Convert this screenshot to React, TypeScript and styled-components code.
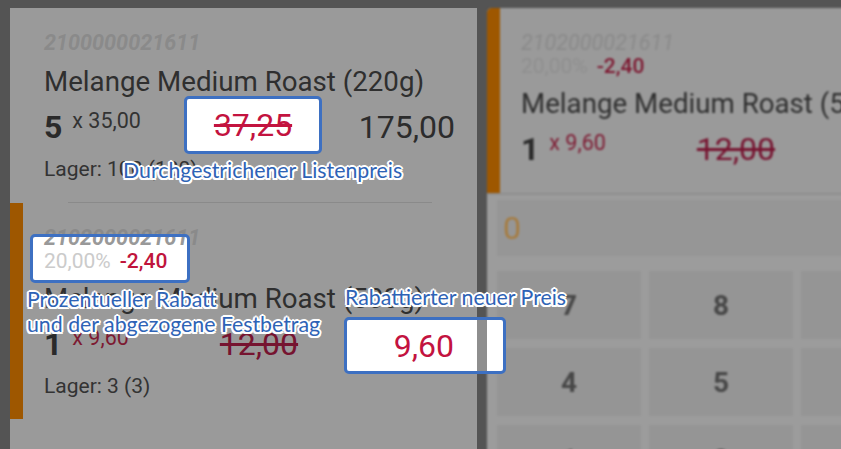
import styled, { createGlobalStyle } from 'styled-components';

const GlobalStyle = createGlobalStyle`
  html, body {
    margin: 0;
    padding: 0;
    background: #545454;
    overflow: hidden;
  }
  body {
    font-family: Roboto, 'Liberation Sans', sans-serif;
  }
`;

const Screen = styled.div`
  position: relative;
  width: 841px;
  height: 449px;
  overflow: hidden;
  box-sizing: border-box;
  padding: 8px 0 0 10px;
  display: flex;
  gap: 10px;
  background: #545454;
`;

const CartPanel = styled.div`
  flex: 0 0 467px;
  height: 470px;
  background: #9a9a9a;
  border-radius: 5px 5px 0 0;
`;

const KeypadPanel = styled.div`
  flex: 0 0 467px;
  height: 470px;
  background: #9c9c9c;
  border-radius: 5px 5px 0 0;
  overflow: hidden;
  filter: blur(1px);
  display: flex;
  flex-direction: column;
`;

const Item = styled.div<{ $discounted?: boolean; $card?: boolean }>`
  box-sizing: border-box;
  display: flex;
  flex-direction: column;
  padding: 23px 22px ${p => (p.$card ? 24 : 21)}px ${p => (p.$discounted ? 21 : 34)}px;
  border-left: ${p => (p.$discounted ? '13px solid #9e5700' : 'none')};
  background: #9a9a9a;
  box-shadow: ${p => (p.$card ? '0 1px 2px rgba(0, 0, 0, 0.18)' : 'none')};
`;

const Barcode = styled.div<{ $light?: boolean; $tone?: string }>`
  font-size: 21.6px;
  line-height: 24px;
  font-style: italic;
  font-weight: ${p => (p.$light ? 400 : 700)};
  color: ${p => p.$tone || '#8a8a8a'};
  white-space: nowrap;
`;

const DiscountLine = styled.div`
  display: flex;
  gap: 9px;
  font-size: 21px;
  line-height: 22px;
  white-space: nowrap;
`;

const Percent = styled.span<{ $tone?: string }>`
  color: ${p => p.$tone || '#8f8f8f'};
`;

const Deduction = styled.span<{ $tone?: string }>`
  color: ${p => p.$tone || '#7d1730'};
  font-weight: 500;
`;

const ProductName = styled.div`
  margin-top: 9px;
  font-size: 27.7px;
  line-height: 36px;
  color: #2f2f2f;
  white-space: nowrap;
`;

const PriceRow = styled.div`
  display: flex;
  align-items: flex-start;
  margin-top: 7px;
  height: 40px;
  white-space: nowrap;
`;

const Quantity = styled.span`
  font-size: 32px;
  line-height: 40px;
  font-weight: 700;
  color: #2a2a2a;
`;

const UnitPrice = styled.span<{ $reduced?: boolean }>`
  margin: 2px 0 0 10px;
  font-size: 21.5px;
  line-height: 24px;
  color: ${p => (p.$reduced ? '#7d1a32' : '#333333')};
`;

const ListPrice = styled.span`
  margin-left: 91px;
  font-size: 32px;
  line-height: 40px;
  color: #761430;
  text-decoration: line-through;
`;

const Total = styled.span<{ $reduced?: boolean }>`
  margin-left: auto;
  font-size: 32px;
  line-height: 40px;
  color: ${p => (p.$reduced ? '#761430' : '#2c2c2c')};
`;

const Stock = styled.div`
  margin-top: 10px;
  font-size: 21px;
  line-height: 24px;
  color: #333333;
`;

const Divider = styled.div`
  height: 1px;
  margin: 0 45px 0 58px;
  background: #8a8a8a;
`;

const Display = styled.div`
  margin: 7px 10px 0;
  height: 56px;
  padding-left: 6px;
  background: #969696;
  font-size: 32px;
  line-height: 56px;
  color: #a67c40;
`;

const Keypad = styled.div`
  margin: 15px 10px 0;
  display: grid;
  grid-template-columns: repeat(3, 144px);
  grid-auto-rows: 68px;
  gap: 9px 8px;
`;

const Key = styled.div`
  display: flex;
  align-items: center;
  justify-content: center;
  background: #959595;
  font-size: 28px;
  font-weight: 700;
  color: #474747;
`;

const Callout = styled.div<{ $x: number; $y: number; $w: number; $h: number }>`
  position: absolute;
  left: ${p => p.$x}px;
  top: ${p => p.$y}px;
  width: ${p => p.$w}px;
  height: ${p => p.$h}px;
  box-sizing: border-box;
  border: 3px solid #3d70c2;
  border-radius: 5px;
  background: #ffffff;
  overflow: hidden;
`;

const CalloutPrice = styled.div<{ $align: 'center' | 'right' }>`
  display: flex;
  justify-content: ${p => (p.$align === 'center' ? 'center' : 'flex-end')};
  padding: ${p => (p.$align === 'center' ? '6px 0 0' : '6px 49px 0 0')};
  font-size: 32px;
  line-height: 40px;
  color: #c3133f;
`;

const Struck = styled.span`
  text-decoration: line-through;
`;

const CalloutDiscount = styled.div`
  margin-top: -11px;
  padding-left: 11px;
`;

const PanelGap = styled.div`
  position: absolute;
  left: 130px;
  top: 0;
  bottom: 0;
  width: 10px;
  background: #8e8e8e;
`;

const Label = styled.div<{ $x: number; $y: number }>`
  position: absolute;
  left: ${p => p.$x}px;
  top: ${p => p.$y}px;
  font-family: Lato, 'Open Sans', sans-serif;
  font-size: 21.3px;
  line-height: 25px;
  color: #2e63b6;
  white-space: nowrap;
  text-shadow:
    -2px 0 #fff, 2px 0 #fff, 0 -2px #fff, 0 2px #fff,
    -1.5px -1.5px #fff, 1.5px 1.5px #fff, -1.5px 1.5px #fff, 1.5px -1.5px #fff,
    0 0 3px #fff;
`;

const keys = ['7', '8', '9', '4', '5', '6', '1', '2', '3'];

export default function App() {
  return (
    <>
      <GlobalStyle />
      <Screen>
        <CartPanel>
          <Item>
            <Barcode>2100000021611</Barcode>
            <ProductName>Melange Medium Roast (220g)</ProductName>
            <PriceRow>
              <Quantity>5</Quantity>
              <UnitPrice>x 35,00</UnitPrice>
              <ListPrice>37,25</ListPrice>
              <Total>175,00</Total>
            </PriceRow>
            <Stock>Lager: 100 (100)</Stock>
          </Item>
          <Divider />
          <Item $discounted>
            <Barcode>2102000021611</Barcode>
            <DiscountLine>
              <Percent>20,00%</Percent>
              <Deduction>-2,40</Deduction>
            </DiscountLine>
            <ProductName>Melange Medium Roast (500g)</ProductName>
            <PriceRow>
              <Quantity>1</Quantity>
              <UnitPrice $reduced>x 9,60</UnitPrice>
              <ListPrice>12,00</ListPrice>
              <Total $reduced>9,60</Total>
            </PriceRow>
            <Stock>Lager: 3 (3)</Stock>
          </Item>
        </CartPanel>

        <KeypadPanel>
          <Item $discounted $card>
            <Barcode $light>2102000021611</Barcode>
            <DiscountLine>
              <Percent>20,00%</Percent>
              <Deduction>-2,40</Deduction>
            </DiscountLine>
            <ProductName>Melange Medium Roast (500g)</ProductName>
            <PriceRow>
              <Quantity>1</Quantity>
              <UnitPrice $reduced>x 9,60</UnitPrice>
              <ListPrice>12,00</ListPrice>
              <Total $reduced>9,60</Total>
            </PriceRow>
          </Item>
          <Display>0</Display>
          <Keypad>
            {keys.map(k => (
              <Key key={k}>{k}</Key>
            ))}
          </Keypad>
        </KeypadPanel>

        <Callout $x={184} $y={96} $w={138} $h={58}>
          <CalloutPrice $align="center">
            <Struck>37,25</Struck>
          </CalloutPrice>
        </Callout>

        <Callout $x={30} $y={234} $w={160} $h={49}>
          <CalloutDiscount>
            <Barcode $tone="#999999">2102000021611</Barcode>
            <DiscountLine>
              <Percent $tone="#cbcbcb">20,00%</Percent>
              <Deduction $tone="#c0143c">-2,40</Deduction>
            </DiscountLine>
          </CalloutDiscount>
        </Callout>

        <Callout $x={344} $y={317} $w={162} $h={57}>
          <PanelGap />
          <CalloutPrice $align="right">9,60</CalloutPrice>
        </Callout>

        <Label $x={123} $y={158}>Durchgestrichener Listenpreis</Label>
        <Label $x={27} $y={287}>
          Prozentueller Rabatt
          <br />
          und der abgezogene Festbetrag
        </Label>
        <Label $x={345} $y={285}>Rabattierter neuer Preis</Label>
      </Screen>
    </>
  );
}
